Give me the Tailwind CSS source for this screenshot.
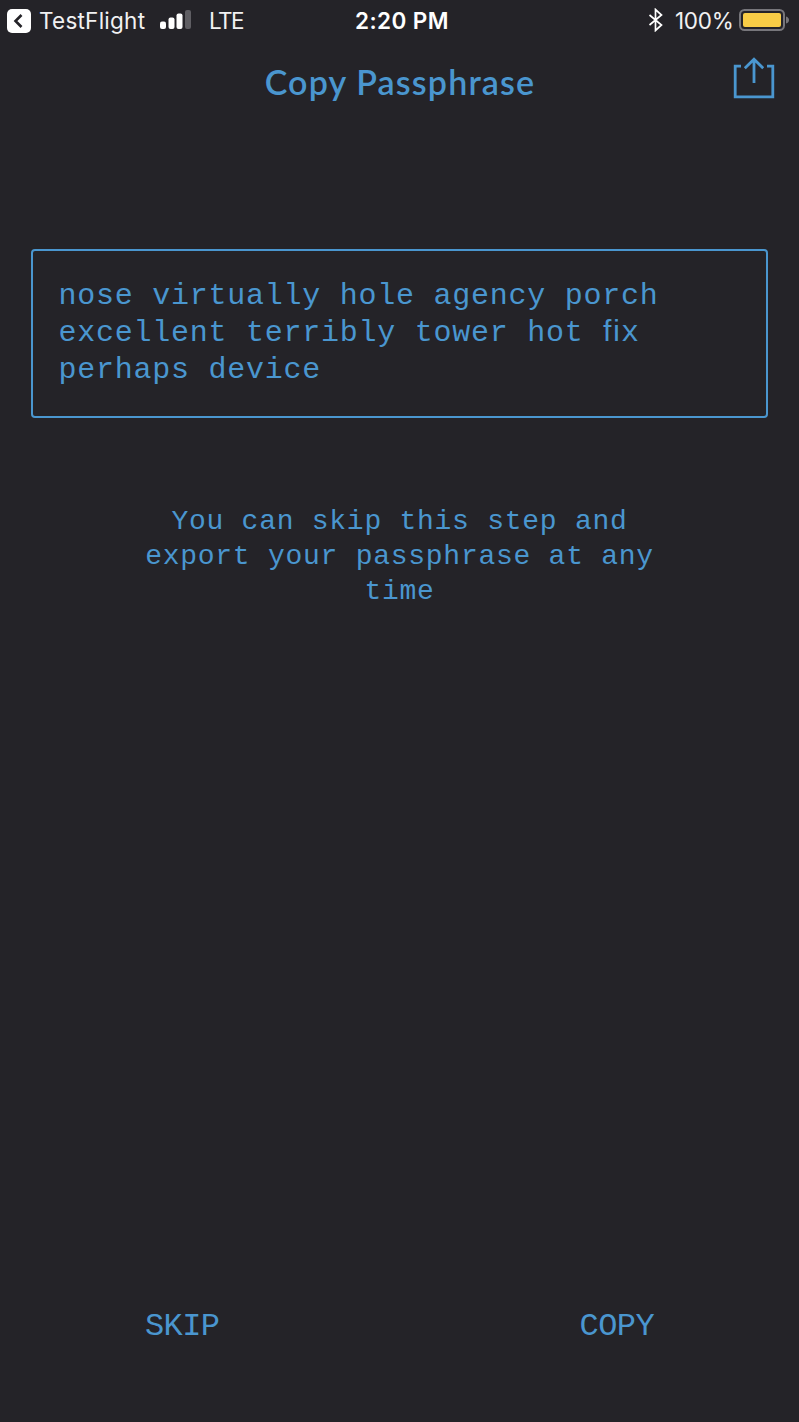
<!DOCTYPE html>
<html lang="en">
<head>
<meta charset="utf-8">
<title>Copy Passphrase</title>
<script src="https://cdn.jsdelivr.net/npm/@tailwindcss/browser@4"></script>
</head>
<body class="bg-[#242328]">
<div class="flex h-[1422px] w-[799px] flex-col bg-[#242328] font-['Liberation_Mono',monospace] text-[#4a96cf]">
  <header class="grid h-10 grid-cols-[1fr_auto_1fr] items-center pr-[10px] pl-[7px] font-['Inter',sans-serif] text-[22.5px] leading-[38px] whitespace-nowrap text-[#f1f1f2]">
    <div class="flex items-center">
      <svg class="mt-px h-6 w-6" viewBox="0 0 24 24"><rect width="24" height="24" rx="5" fill="#fff"/><path d="M14.500 6L8.500 12l6 6" fill="none" stroke="#242328" stroke-width="2.6"/></svg>
      <span class="ml-[8px] w-[107px] pt-px tracking-[0.25px]">TestFlight</span>
      <svg class="ml-[14px] h-5 w-[31px]" viewBox="0 0 31 20" fill="#fff"><rect y="11.500" width="6" height="7.500" rx="2"/><rect x="8.500" y="7.500" width="6" height="11.500" rx="2"/><rect x="16.500" y="3.500" width="6" height="15.500" rx="2"/><rect x="25" y="0" width="6" height="19" rx="2" fill="#5f5e63"/></svg>
      <span class="ml-[18px] pt-px tracking-[-1.5px]">LTE</span>
    </div>
    <div class="pt-px pl-[8px] font-semibold tracking-[0.4px] text-white">2:20 PM</div>
    <div class="flex items-center justify-end">
      <svg class="h-6 w-4" viewBox="0 0 16 24" fill="none" stroke="#fff" stroke-width="1.700"><path d="M1.500 7L13.500 17l-6 5.500v-21l6 5.500L1.500 17"/></svg>
      <span class="ml-[11px] w-[59px] pt-px tracking-[-0.3px]">100%</span>
      <svg class="ml-[5px] h-[22px] w-[50px]" viewBox="0 0 50 22"><rect x="1" y="1" width="44" height="20" rx="4.500" fill="none" stroke="#77767b" stroke-width="2"/><rect x="4" y="4" width="38" height="14" rx="2" fill="#f9cd46"/><path d="M47 7.500q3 1 3 3.500t-3 3.500z" fill="#77767b"/></svg>
    </div>
  </header>
  <div class="grid h-[84px] grid-cols-[1fr_auto_1fr] items-center pr-[24px] pl-[24px]">
    <span></span>
    <h1 class="pl-px font-['Lato',sans-serif] text-[34px] leading-[84px] font-semibold tracking-[1.15px]">Copy Passphrase</h1>
    <svg class="mt-[-8px] h-[42px] w-[42px] justify-self-end" viewBox="0 0 42 42" fill="none" stroke="currentColor" stroke-width="2.800"><path d="M8 9.200H2.200v30.600h37.600V9.200H34M21 26V2.200M11.800 11.200l9.200-9 9.200 9"/></svg>
  </div>
  <div class="mx-[31px] mt-[125px] h-[169px] rounded-[4px] border-2 border-current pt-[27px] pl-[25.500px] text-[30px] leading-[37px] tracking-[0.75px] whitespace-nowrap">
    nose virtually hole agency porch<br>excellent terribly tower hot ﬁx<br>perhaps device
  </div>
  <p class="mt-[86px] text-center text-[28px] leading-[35px] tracking-[0.74px]">You can skip this step and<br>export your passphrase at any<br>time</p>
  <div class="mt-auto mb-[75px] flex justify-between px-[145px] text-[32px] leading-10 tracking-[-0.6px]">
    <button>SKIP</button>
    <button>COPY</button>
  </div>
</div>
</body>
</html>
